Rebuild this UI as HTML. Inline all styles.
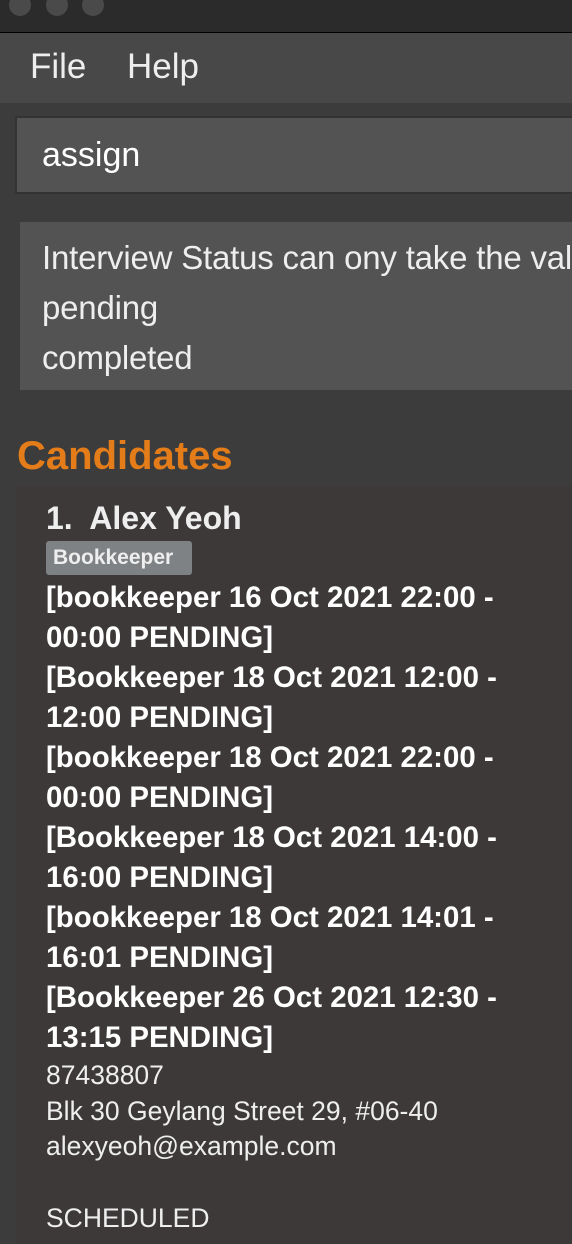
<!DOCTYPE html>
<html><head><style>
html,body{margin:0;width:572px;height:1244px;overflow:hidden}
body{background:#3c3c3c;font-family:"Liberation Sans",sans-serif;color:#fff;position:relative}
.tb{position:absolute;left:0;top:0;width:572px;height:32px;background:#2b2b2b;border-bottom:1px solid #000}
.dot{position:absolute;top:-6px;width:22px;height:22px;border-radius:50%;background:#4a4a4a}
.menu{position:absolute;left:0;top:33px;width:572px;height:70px;background:#484848}
.menu span{position:absolute;top:14px;font-size:35px;color:#eee}
.cmd{position:absolute;left:15px;top:116px;width:557px;height:74px;background:#535353;border:2px solid #333;border-right:none}
.cmd span{position:absolute;left:25px;top:18px;font-size:34px;color:#fff}
.res{position:absolute;left:20px;top:222px;width:552px;height:168px;overflow:hidden;background:#535353;font-size:33px;line-height:50px;padding-left:22px;padding-top:11px;box-sizing:border-box;color:#eee;white-space:nowrap;letter-spacing:-0.2px}
.h{position:absolute;left:17px;top:434px;font-size:40px;font-weight:bold;color:#e47d19}
.card{position:absolute;left:16px;top:486px;width:556px;height:760px;background:#3d3939;overflow:hidden}
.name{position:absolute;left:30px;top:14px;font-size:32px;font-weight:bold;color:#eee}
.tag{position:absolute;left:30px;top:55px;width:146px;height:34px;background:#7f8285;border-radius:3px;font-size:21px;font-weight:bold;color:#eee;line-height:34px;padding-left:7px;box-sizing:border-box}
.iv{position:absolute;left:30px;top:92px;font-size:29.4px;font-weight:bold;line-height:40px;color:#fff;white-space:nowrap}
.d{position:absolute;left:30px;font-size:26.5px;color:#eee;white-space:nowrap}
</style></head><body>
<div class="tb"><div class="dot" style="left:9px"></div><div class="dot" style="left:46px"></div><div class="dot" style="left:82px"></div></div>
<div class="menu"><span style="left:30px">File</span><span style="left:127px">Help</span></div>
<div class="cmd"><span>assign</span></div>
<div class="res">Interview Status can ony take the values<br>pending<br>completed</div>
<div class="h">Candidates</div>
<div class="card">
<div class="name">1.&nbsp; Alex Yeoh</div>
<div class="tag">Bookkeeper</div>
<div class="iv">[bookkeeper 16 Oct 2021 22:00 -<br>00:00 PENDING]<br>[Bookkeeper 18 Oct 2021 12:00 -<br>12:00 PENDING]<br>[bookkeeper 18 Oct 2021 22:00 -<br>00:00 PENDING]<br>[Bookkeeper 18 Oct 2021 14:00 -<br>16:00 PENDING]<br>[bookkeeper 18 Oct 2021 14:01 -<br>16:01 PENDING]<br>[Bookkeeper 26 Oct 2021 12:30 -<br>13:15 PENDING]</div>
<div class="d" style="top:574px">87438807</div>
<div class="d" style="top:610px">Blk 30 Geylang Street 29, #06-40</div>
<div class="d" style="top:645px">alexyeoh@example.com</div>
<div class="d" style="top:717px">SCHEDULED</div>
</div>
</body></html>
